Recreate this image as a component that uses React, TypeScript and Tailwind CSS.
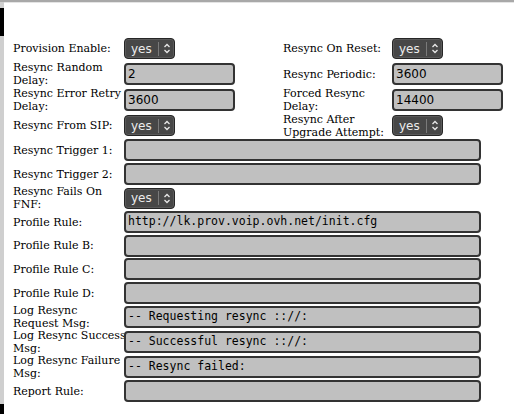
const serif = { fontFamily: '"DejaVu Serif", serif' };

function Label({ lines, className = "" }: { lines: string[]; className?: string }) {
  return (
    <div className={`text-[11px] leading-[13px] text-black whitespace-nowrap ${className}`} style={serif}>
      {lines.map((l, i) => (
        <div key={i}>{l}</div>
      ))}
    </div>
  );
}

function YesSelect() {
  return (
    <div className="flex h-[21px] w-[51px] items-center rounded-[4px] border border-[#262626] bg-[#474747] shadow-[inset_0_0_0_1px_#5a5a5a]">
      <span className="pl-[6px] text-[12px] leading-none text-[#ececec] font-['DejaVu_Sans',sans-serif]">yes</span>
      <span className="ml-[6px] h-[14px] w-px bg-[#7a7a7a]" />
      <svg width="8" height="11" viewBox="0 0 8 11" className="ml-[4px]">
        <path d="M1.5 4 L4 1.5 L6.5 4" fill="none" stroke="#e8e8e8" strokeWidth="1.3" />
        <path d="M1.5 7 L4 9.5 L6.5 7" fill="none" stroke="#e8e8e8" strokeWidth="1.3" />
      </svg>
    </div>
  );
}

function TextBox({ value = "", wide = false, mono = false }: { value?: string; wide?: boolean; mono?: boolean }) {
  return (
    <div
      className={`flex h-[22px] items-center rounded-[4px] border-2 border-[#333] bg-[#c0c0c0] pl-[2px] text-black whitespace-nowrap overflow-hidden ${
        wide ? "w-[357px]" : "w-[111px]"
      } ${mono ? "text-[11.5px] font-['DejaVu_Sans_Mono',monospace]" : "text-[12px] font-['DejaVu_Sans',sans-serif]"}`}
    >
      {value}
    </div>
  );
}

type Row = {
  h: number;
  label: string[];
  field: "select" | "short" | "wide";
  value?: string;
  right?: { label: string[]; field: "select" | "short"; value?: string };
};

const rows: Row[] = [
  { h: 25, label: ["Provision Enable:"], field: "select", right: { label: ["Resync On Reset:"], field: "select" } },
  { h: 26, label: ["Resync Random", "Delay:"], field: "short", value: "2", right: { label: ["Resync Periodic:"], field: "short", value: "3600" } },
  { h: 26, label: ["Resync Error Retry", "Delay:"], field: "short", value: "3600", right: { label: ["Forced Resync", "Delay:"], field: "short", value: "14400" } },
  { h: 25, label: ["Resync From SIP:"], field: "select", right: { label: ["Resync After", "Upgrade Attempt:"], field: "select" } },
  { h: 24, label: ["Resync Trigger 1:"], field: "wide" },
  { h: 24, label: ["Resync Trigger 2:"], field: "wide" },
  { h: 24, label: ["Resync Fails On", "FNF:"], field: "select" },
  { h: 24, label: ["Profile Rule:"], field: "wide", value: "http://lk.prov.voip.ovh.net/init.cfg" },
  { h: 23, label: ["Profile Rule B:"], field: "wide" },
  { h: 24, label: ["Profile Rule C:"], field: "wide" },
  { h: 24, label: ["Profile Rule D:"], field: "wide" },
  { h: 24, label: ["Log Resync", "Request Msg:"], field: "wide", value: "-- Requesting resync :://:" },
  { h: 25, label: ["Log Resync Success", "Msg:"], field: "wide", value: "-- Successful resync :://:" },
  { h: 25, label: ["Log Resync Failure", "Msg:"], field: "wide", value: "-- Resync failed:" },
  { h: 24, label: ["Report Rule:"], field: "wide" },
];

function Field({ kind, value }: { kind: "select" | "short" | "wide"; value?: string }) {
  if (kind === "select") return <YesSelect />;
  if (kind === "short") return <TextBox value={value} />;
  return <TextBox value={value} wide mono />;
}

export default function App() {
  return (
    <div className="flex h-[414px] w-[514px] overflow-hidden bg-white">
      <div className="flex w-[4px] flex-col">
        <div className="h-[2px] bg-[#a8a8a8]" />
        <div className="h-[6px] bg-[#cfcfcf]" />
        <div className="h-[28px] bg-black" />
        <div className="h-[368px] bg-[#cfcfcf]" />
        <div className="flex-1 bg-black" />
      </div>
      <div className="flex flex-1 flex-col">
        <div className="h-[2px] bg-[#a8a8a8]" />
        <div className="h-[1px] bg-[#e4e4e4]" />
        <div className="flex flex-col pl-[9px] pt-[33px]">
          {rows.map((r, i) => (
            <div key={i} className="flex items-center" style={{ height: r.h }}>
              <Label lines={r.label} className="w-[111px]" />
              {r.right ? (
                <>
                  <div className="w-[159px]">
                    <Field kind={r.field} value={r.value} />
                  </div>
                  <Label lines={r.right.label} className="w-[109px]" />
                  <Field kind={r.right.field} value={r.right.value} />
                </>
              ) : (
                <Field kind={r.field} value={r.value} />
              )}
            </div>
          ))}
        </div>
      </div>
    </div>
  );
}
